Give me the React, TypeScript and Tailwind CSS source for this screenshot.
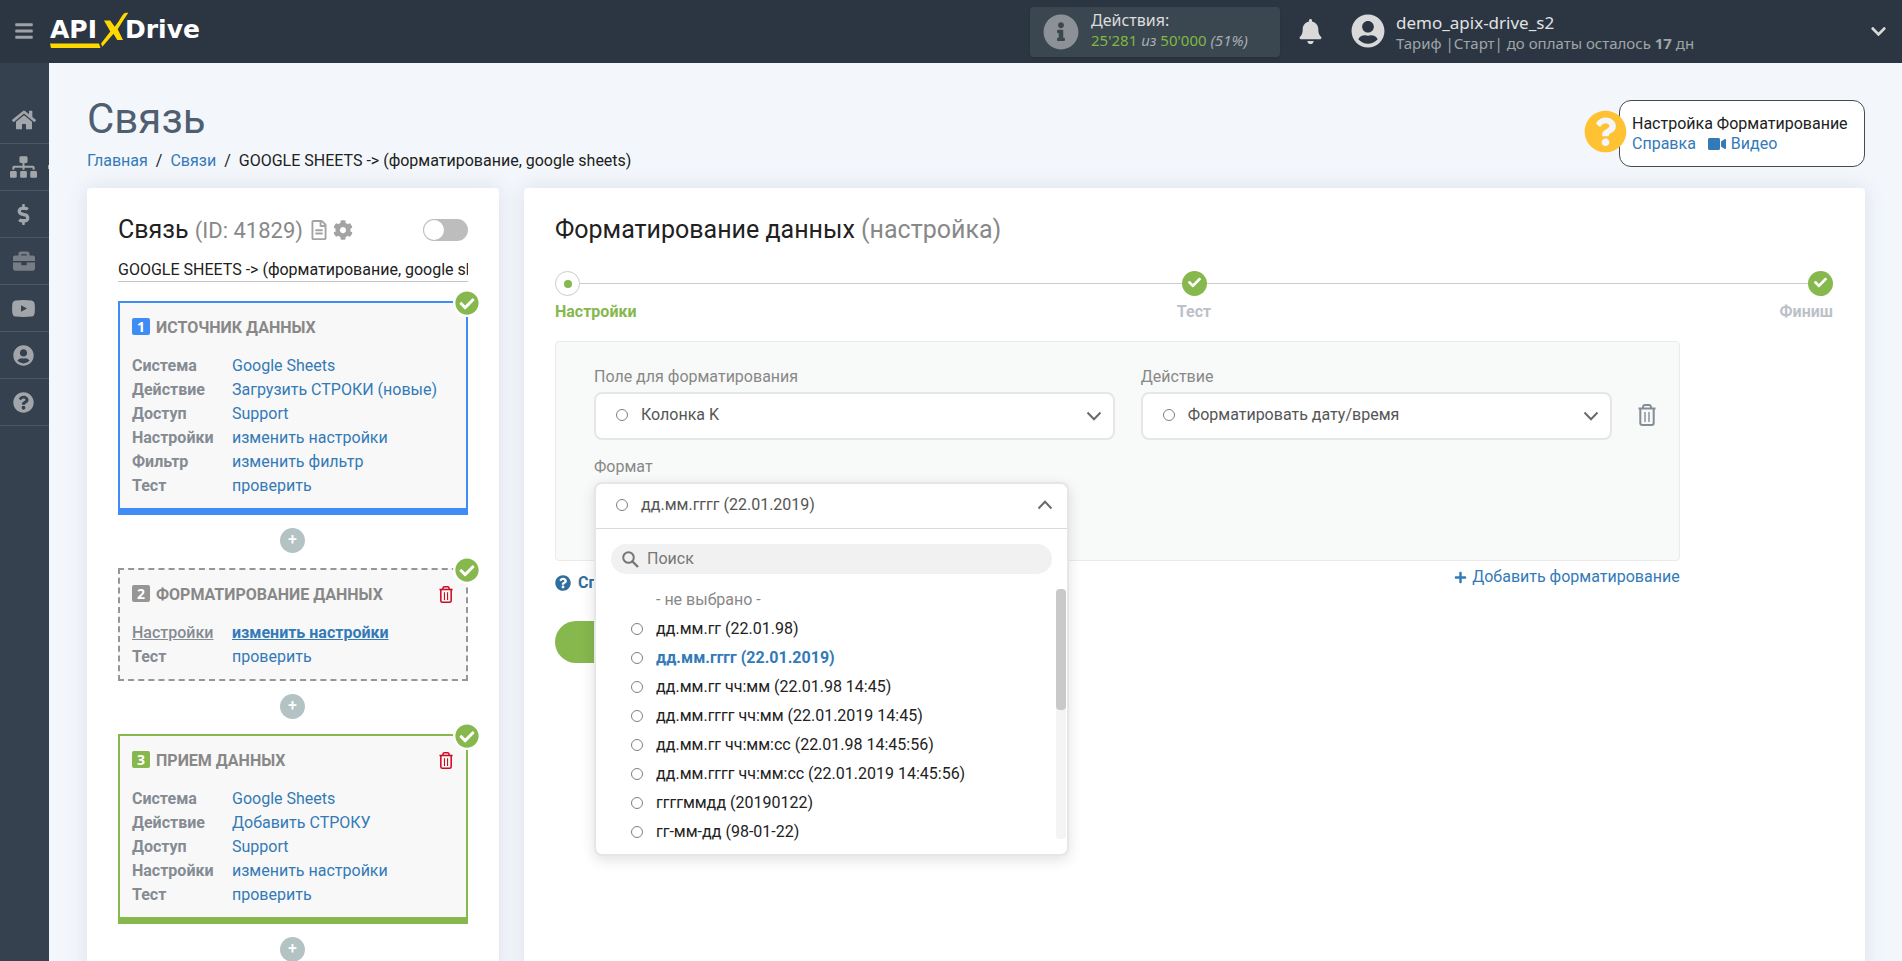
import React from "react";
import {
  FaBars,
  FaBell,
  FaBriefcase,
  FaCheck,
  FaCheckCircle,
  FaChevronDown,
  FaCog,
  FaDollarSign,
  FaHome,
  FaInfoCircle,
  FaPlus,
  FaQuestionCircle,
  FaRegFileAlt,
  FaSitemap,
  FaUserCircle,
  FaVideo,
} from "react-icons/fa";

function TrashIcon({ className }: { className: string }) {
  return (
    <svg viewBox="0 0 18 22" className={className} fill="none" stroke="currentColor" aria-hidden="true">
      <path d="M0.5 4.500h17" strokeWidth="2" />
      <path d="M5 4V3Q5.200 1 7 1h4q1.800 0 2 2v1" strokeWidth="2" />
      <path d="M2.300 5v14q0 2 2 2h9.400q2 0 2-2V5" strokeWidth="2" />
      <path d="M7 8v10M11 8v10" strokeWidth="1.400" />
    </svg>
  );
}

function PlayIcon({ className }: { className: string }) {
  return (
    <svg viewBox="0 0 23 17" className={className} aria-hidden="true">
      <path
        fill="currentColor"
        fillRule="evenodd"
        d="M3.500.5Q11.500-.4 19.500.5Q22.300.8 22.600 3.500Q23.200 8.500 22.600 13.500Q22.300 16.200 19.500 16.500Q11.500 17.300 3.500 16.500Q.7 16.200.4 13.500Q-.2 8.500.4 3.500Q.7.8 3.500.5ZM9 5.200v6.600l6-3.300z"
      />
    </svg>
  );
}

function Chevron({ up = false }: { up?: boolean }) {
  return (
    <svg
      viewBox="0 0 16 10"
      className={up ? "h-[10px] w-4 rotate-180" : "h-[10px] w-4"}
      fill="none"
      stroke="#6b6b6b"
      strokeWidth="2"
      aria-hidden="true"
    >
      <path d="M1.500 1.500 8 8.200 14.500 1.500" />
    </svg>
  );
}

function Dot() {
  return <span className="block size-3 shrink-0 rounded-full border border-[#808080] bg-white" />;
}

function Logo() {
  return (
    <a
      href="#home"
      aria-label="APIXDrive"
      className="relative flex h-[44px] items-center text-[25px] leading-8 font-bold text-white [font-family:'DejaVu_Sans',sans-serif]"
    >
      <span>API</span>
      <span className="w-7" />
      <span>Drive</span>
      <svg viewBox="0 0 160 44" className="absolute top-0 left-0 h-[44px] w-[160px]" fill="#ffd800" aria-hidden="true">
        <path d="M0 35.500h49l1.500 4.500H1z" />
        <path d="M54 12.500h6.200l4.500 6.200Q68.500 14 71 9.500 73.500 4.800 76 4.800h2.300Q73 12.500 67.700 21.300L73 32h-5.800L63.500 25.800 52.300 38.800 51 35.600 60.300 23.500z" />
      </svg>
    </a>
  );
}

function Header() {
  return (
    <header className="flex h-[63px] shrink-0 items-center bg-[#2b3642] pr-[15px] pl-[14px] [font-family:'Noto_Sans',sans-serif]">
      <button type="button" aria-label="Меню" className="pb-[2px] text-[#9ea2a6]">
        <FaBars className="size-5" />
      </button>
      <div className="ml-4 pb-1">
        <Logo />
      </div>
      <div className="flex-1" />
      <div className="flex h-[50px] w-[250px] items-center rounded bg-[#3b4750] pl-[13px] shadow-sm">
        <FaInfoCircle className="size-9 text-[#8b9196]" />
        <div className="ml-3 pb-[3px]">
          <div className="text-[16px] leading-5 text-[#dcdcdc]">Действия:</div>
          <div className="text-[15px] leading-5 text-[#a8adb0]">
            <span className="text-[#7fb842]">25'281</span> <i>из</i> <span className="text-[#7fb842]">50'000</span>{" "}
            <i>(51%)</i>
          </div>
        </div>
      </div>
      <button type="button" aria-label="Уведомления" className="ml-[18px] text-[#d9d9d9]">
        <FaBell className="size-[25px]" />
      </button>
      <div className="ml-[28px] flex items-center pb-[2px]">
        <FaUserCircle className="size-[34px] text-[#d9d9d9]" />
        <div className="ml-[11px] w-[474px] pt-1">
          <div className="text-[17px] leading-5 text-[#e2e2e2]">demo_apix-drive_s2</div>
          <div className="text-[15px] leading-5 text-[#a0a5a9]">
            Тариф |Старт| до оплаты осталось <b>17</b> дн
          </div>
        </div>
      </div>
      <button type="button" aria-label="Профиль" className="text-[#d9d9d9]">
        <FaChevronDown className="size-[17px]" />
      </button>
    </header>
  );
}

const navItems = [
  { label: "Главная", icon: <FaHome className="size-6" /> },
  { label: "Связи", icon: <FaSitemap className="h-[22px] w-[27px]" />, mark: true },
  { label: "Оплата", icon: <FaDollarSign className="size-[21px]" /> },
  { label: "Работа", icon: <FaBriefcase className="size-[22px] opacity-60" /> },
  { label: "Видео", icon: <PlayIcon className="h-[17px] w-[23px]" /> },
  { label: "Профиль", icon: <FaUserCircle className="size-[21px]" /> },
  { label: "Помощь", icon: <FaQuestionCircle className="size-[21px]" /> },
];

function Sidebar() {
  return (
    <nav className="w-[49px] shrink-0 bg-[#36414f] pt-[34px] text-[#a2a6aa]">
      {navItems.map((item) => (
        <a
          key={item.label}
          href="#nav"
          aria-label={item.label}
          className="relative flex h-[47px] items-center justify-center border-b border-[#4c5764] pr-[2px]"
        >
          {item.icon}
          {item.mark && <span className="absolute right-0 h-1 w-px bg-[#a2a6aa]" />}
        </a>
      ))}
    </nav>
  );
}

type Row = [label: string, value: string, active?: boolean];

function StepBox({
  frame,
  badge,
  number,
  title,
  rows,
  removable = false,
}: {
  frame: string;
  badge: string;
  number: number;
  title: string;
  rows: Row[];
  removable?: boolean;
}) {
  return (
    <section className={`relative bg-[#f8f8f8] px-3 pt-3 pb-[10px] ${frame}`}>
      <span className="absolute -top-[14px] -right-[15px] rounded-full bg-white p-[2px]">
        <FaCheckCircle className="size-6 text-[#86b84e]" />
      </span>
      <div className="mb-[14px] flex h-[25px] items-center">
        <span
          className={`mb-[2px] flex h-[17px] w-[18px] items-center justify-center rounded-[2px] text-[14px] leading-none font-bold text-white [font-family:'Noto_Sans',sans-serif] ${badge}`}
        >
          {number}
        </span>
        <h3 className="ml-[6px] flex-1 pt-px font-bold text-[#888]">{title}</h3>
        {removable && (
          <button type="button" aria-label="Удалить" className="mr-px text-[#cf0a22]">
            <TrashIcon className="h-[17px] w-[14px]" />
          </button>
        )}
      </div>
      <dl className="grid grid-cols-[100px_1fr] leading-6">
        {rows.map(([label, value, active]) => (
          <React.Fragment key={label}>
            <dt className={active ? "font-medium text-[#858b93] underline" : "font-bold text-[#858b93]"}>{label}</dt>
            <dd className="whitespace-nowrap">
              <a href="#edit" className={active ? "font-bold text-[#337ab7] underline" : "text-[#337ab7]"}>
                {value}
              </a>
            </dd>
          </React.Fragment>
        ))}
      </dl>
    </section>
  );
}

function AddButton() {
  return (
    <div className="flex justify-center pt-[13px] pr-px pb-[15px]">
      <button
        type="button"
        aria-label="Добавить шаг"
        className="flex size-[25px] items-center justify-center rounded-full bg-[#b3c2c2] pb-[2px] text-[16px] leading-none font-medium text-white"
      >
        +
      </button>
    </div>
  );
}

function ConnectionCard() {
  return (
    <aside className="w-[412px] shrink-0 rounded-t bg-white px-[31px] pt-6 shadow-[0_0_20px_rgba(60,70,100,0.13)]">
      <div className="flex h-9 items-center">
        <h2 className="text-[25px] leading-9 text-[#212121]">
          Связь <span className="text-[22px] text-[#888]">(ID: 41829)</span>
        </h2>
        <button type="button" aria-label="Журнал" className="ml-[6px] text-[#a3a3a3]">
          <FaRegFileAlt className="size-5" />
        </button>
        <button type="button" aria-label="Параметры" className="ml-[4px] text-[#a3a3a3]">
          <FaCog className="size-5" />
        </button>
        <label className="relative ml-auto block h-[22px] w-[45px]">
          <input type="checkbox" role="switch" aria-label="Включить связь" className="peer sr-only" />
          <span className="block h-full rounded-full bg-[#bdbdbd] p-px peer-checked:bg-[#86b84e]">
            <span className="block size-5 rounded-full bg-white" />
          </span>
        </label>
      </div>
      <input
        aria-label="Название связи"
        defaultValue="GOOGLE SHEETS -> (форматирование, google sheets)"
        className="mt-[10px] block h-6 w-full border-b border-[#c4c4c4] pt-px text-[#212121] outline-none"
      />
      <div className="mt-[19px]">
        <StepBox
          frame="border-2 border-b-[7px] border-[#3f8cf6]"
          badge="bg-[#3f8cf6]"
          number={1}
          title="ИСТОЧНИК ДАННЫХ"
          rows={[
            ["Система", "Google Sheets"],
            ["Действие", "Загрузить СТРОКИ (новые)"],
            ["Доступ", "Support"],
            ["Настройки", "изменить настройки"],
            ["Фильтр", "изменить фильтр"],
            ["Тест", "проверить"],
          ]}
        />
        <AddButton />
        <StepBox
          frame="border-2 border-dashed border-[#969696]"
          badge="bg-[#969696]"
          number={2}
          title="ФОРМАТИРОВАНИЕ ДАННЫХ"
          removable
          rows={[
            ["Настройки", "изменить настройки", true],
            ["Тест", "проверить"],
          ]}
        />
        <AddButton />
        <StepBox
          frame="border-2 border-b-[7px] border-[#86b84e]"
          badge="bg-[#86b84e]"
          number={3}
          title="ПРИЕМ ДАННЫХ"
          removable
          rows={[
            ["Система", "Google Sheets"],
            ["Действие", "Добавить СТРОКУ"],
            ["Доступ", "Support"],
            ["Настройки", "изменить настройки"],
            ["Тест", "проверить"],
          ]}
        />
        <AddButton />
      </div>
    </aside>
  );
}

function Steps() {
  return (
    <ol className="relative mt-[23px] flex justify-between font-bold text-[#bcc1c9]">
      <li className="absolute inset-x-3 top-3 h-px bg-[#cbcbcb]" aria-hidden="true" />
      <li className="relative flex flex-1 flex-col items-start text-[#86b84e]">
        <span className="flex size-[25px] items-center justify-center rounded-full border border-[#cbcbcb] bg-white">
          <span className="size-2 rounded-full bg-[#86b84e]" />
        </span>
        <span className="mt-1 leading-6">Настройки</span>
      </li>
      <li className="relative flex flex-1 flex-col items-center">
        <span className="flex size-[25px] items-center justify-center rounded-full bg-[#86b84e] pb-[2px]">
          <FaCheck className="size-[13px] text-white" />
        </span>
        <span className="mt-1 leading-6">Тест</span>
      </li>
      <li className="relative flex flex-1 flex-col items-end">
        <span className="flex size-[25px] items-center justify-center rounded-full bg-[#86b84e] pb-[2px]">
          <FaCheck className="size-[13px] text-white" />
        </span>
        <span className="mt-1 leading-6">Финиш</span>
      </li>
    </ol>
  );
}

function SelectField({ id, label, value, grow }: { id: string; label: string; value: string; grow: string }) {
  return (
    <div className={`min-w-0 ${grow}`}>
      <label htmlFor={id} className="block h-[27px] leading-6 text-[#888]">
        {label}
      </label>
      <div className="relative">
        <select
          id={id}
          className="block h-12 w-full appearance-none rounded-lg border-2 border-[#e6e6e6] bg-white pr-10 pb-[2px] pl-[45px] text-[#555]"
        >
          <option>{value}</option>
        </select>
        <span className="pointer-events-none absolute inset-y-0 left-[22px] flex items-center pb-[2px]">
          <Dot />
        </span>
        <span className="pointer-events-none absolute inset-y-0 right-[13px] flex items-center">
          <Chevron />
        </span>
      </div>
    </div>
  );
}

const formats = [
  "дд.мм.гг (22.01.98)",
  "дд.мм.гггг (22.01.2019)",
  "дд.мм.гг чч:мм (22.01.98 14:45)",
  "дд.мм.гггг чч:мм (22.01.2019 14:45)",
  "дд.мм.гг чч:мм:сс (22.01.98 14:45:56)",
  "дд.мм.гггг чч:мм:сс (22.01.2019 14:45:56)",
  "ггггммдд (20190122)",
  "гг-мм-дд (98-01-22)",
];

function FormatDropdown() {
  return (
    <div className="absolute inset-x-0 top-0 z-10 rounded-lg border-2 border-[#e6e6e6] bg-white shadow-[0_4px_14px_rgba(0,0,0,0.12)]">
      <button
        type="button"
        id="format"
        aria-expanded="true"
        aria-haspopup="listbox"
        className="flex h-[45px] w-full items-center border-b border-[#dadada] pr-[14px] pb-[3px] pl-5 text-[#555]"
      >
        <Dot />
        <span className="ml-[13px] flex-1 text-left">дд.мм.гггг (22.01.2019)</span>
        <Chevron up />
      </button>
      <label className="mx-[15px] mt-[15px] flex h-[30px] items-center rounded-full bg-[#f1f1f1] pl-[11px]">
        <svg viewBox="0 0 17 17" className="size-[17px]" fill="none" stroke="#777" strokeWidth="2" aria-hidden="true">
          <circle cx="6.500" cy="6.500" r="5.300" />
          <path d="m10.500 10.500 5.500 5.500" strokeWidth="2.400" />
        </svg>
        <input
          type="text"
          aria-label="Поиск"
          placeholder="Поиск"
          className="ml-2 min-w-0 flex-1 bg-transparent text-[#555] outline-none placeholder:text-[#777]"
        />
      </label>
      <div className="mt-[11px] flex h-[269px] pr-px">
        <ul role="listbox" aria-labelledby="format" className="min-w-0 flex-1 pl-[35px] leading-[29px] text-[#222]">
          <li role="option" aria-selected="false" className="pl-[25px] text-[#888]">
            - не выбрано -
          </li>
          {formats.map((format, index) => (
            <li key={format} role="option" aria-selected={index === 1} className="flex items-center gap-[13px]">
              <Dot />
              <span className={index === 1 ? "font-bold text-[#337ab7]" : ""}>{format}</span>
            </li>
          ))}
        </ul>
        <div className="mt-[4px] h-[250px] w-[10px] rounded bg-[#f4f4f4]">
          <div className="h-[121px] rounded bg-[#c9c9c9]" />
        </div>
      </div>
    </div>
  );
}

function SettingsCard() {
  return (
    <section className="min-w-0 flex-1 rounded-t bg-white pt-6 pr-8 pl-[31px] shadow-[0_0_20px_rgba(60,70,100,0.13)]">
      <h2 className="text-[25px] leading-9 text-[#212121]">
        Форматирование данных <span className="text-[#888]">(настройка)</span>
      </h2>
      <Steps />
      <div className="w-[88%]">
        <div className="mt-[17px] h-[220px] rounded border border-[#ebebeb] bg-[#f8faf9] pt-[23px] pr-[23px] pl-[38px]">
          <div className="flex gap-[26px]">
            <SelectField id="field" label="Поле для форматирования" value="Колонка K" grow="flex-[521]" />
            <SelectField id="action" label="Действие" value="Форматировать дату/время" grow="flex-[471]" />
            <button type="button" aria-label="Удалить" className="flex h-12 items-center self-end pb-[2px] text-[#838c97]">
              <TrashIcon className="h-[22px] w-[18px]" />
            </button>
          </div>
          <div className="mt-[15px] w-[475px]">
            <label htmlFor="format" className="block h-[27px] leading-6 text-[#888]">
              Формат
            </label>
            <div className="relative h-12">
              <FormatDropdown />
            </div>
          </div>
        </div>
        <div className="flex h-9 items-start justify-between pt-1 leading-6">
          <a href="#help" className="mt-[6px] flex items-center gap-[7px] font-bold text-[#2f6f9f]">
            <FaQuestionCircle className="size-4" />
            Справка
          </a>
          <a href="#add" className="flex items-center gap-[5px] text-[#337ab7]">
            <FaPlus className="size-[13px]" />
            Добавить форматирование
          </a>
        </div>
        <button
          type="button"
          aria-label="Продолжить"
          className="mt-[24px] h-[42px] w-[240px] rounded-full bg-[#86b84e]"
        />
      </div>
    </section>
  );
}

function HelpBox() {
  return (
    <div className="relative h-[67px] w-[246px] rounded-xl border border-[#444b52] bg-white pt-[13px] pl-3 leading-5">
      <span className="absolute top-[9px] -left-[36px] rounded-full bg-[linear-gradient(#f3f7fc,#f3f7fc)] bg-[length:60%_80%] bg-center bg-no-repeat">
        <FaQuestionCircle className="size-[43px] text-[#ffc233]" />
      </span>
      <div className="whitespace-nowrap text-[#212121]">Настройка Форматирование</div>
      <div className="flex items-center text-[#337ab7]">
        <a href="#help">Справка</a>
        <a href="#video" className="ml-3 flex items-center gap-[5px]">
          <FaVideo className="size-[18px]" />
          Видео
        </a>
      </div>
    </div>
  );
}

export default function App() {
  return (
    <div className="flex h-screen flex-col text-[16px] leading-6 [font-family:Roboto,sans-serif]">
      <Header />
      <div className="flex min-h-0 flex-1">
        <Sidebar />
        <main className="flex min-w-0 flex-1 flex-col overflow-y-auto bg-[#f3f7fc] pt-[28px] pr-[37px] pl-[38px] [scrollbar-width:none]">
          <div className="flex h-[97px] shrink-0 justify-between">
            <div>
              <h1 className="text-[42px] leading-[56px] text-[#4f5f6f]">Связь</h1>
              <nav className="mt-[2px] flex gap-2 text-[#212121]">
                <a href="#home" className="text-[#337ab7]">
                  Главная
                </a>
                /
                <a href="#connections" className="text-[#337ab7]">
                  Связи
                </a>
                /<span>GOOGLE SHEETS -&gt; (форматирование, google sheets)</span>
              </nav>
            </div>
            <div className="pt-[9px]">
              <HelpBox />
            </div>
          </div>
          <div className="flex flex-1 gap-[25px]">
            <ConnectionCard />
            <SettingsCard />
          </div>
        </main>
      </div>
    </div>
  );
}
